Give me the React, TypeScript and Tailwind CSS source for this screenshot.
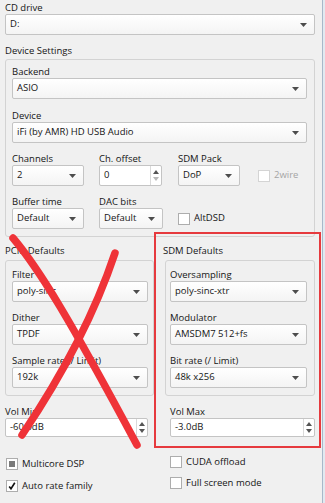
import type { ReactNode } from 'react';
import clsx from 'clsx';

function Label({ children, className }: { children: ReactNode; className?: string }) {
  return <div className={clsx('h-[13px] whitespace-nowrap leading-[13px]', className)}>{children}</div>;
}

function Combo({ value, className }: { value: string; className?: string }) {
  return (
    <div
      className={clsx(
        'flex h-[21px] items-center justify-between rounded-[2px] border border-[#c4c4c4] bg-linear-to-b from-white to-[#f4f4f4] pr-[7px] pl-[4px]',
        className,
      )}
    >
      <span className="whitespace-nowrap">{value}</span>
      <svg width="7" height="4" viewBox="0 0 7 4" className="shrink-0">
        <path d="M0 0H7L3.5 4Z" fill="#4d4d4d" />
      </svg>
    </div>
  );
}

function Spin({ value, className, downDim }: { value: string; className?: string; downDim?: boolean }) {
  return (
    <div className={clsx('flex rounded-[2px] border border-[#c4c4c4] bg-white', className)}>
      <span className="flex flex-1 items-center whitespace-nowrap pl-[4px]">{value}</span>
      <span className="flex w-[11px] flex-col items-center justify-center gap-[3px] border-l border-[#dadada]">
        <svg width="6" height="4" viewBox="0 0 6 4">
          <path d="M3 0L6 4H0Z" fill="#555" />
        </svg>
        <svg width="6" height="4" viewBox="0 0 6 4">
          <path d="M0 0H6L3 4Z" fill={downDim ? '#b8b8b8' : '#555'} />
        </svg>
      </span>
    </div>
  );
}

function Check({ state = 'off', disabled }: { state?: 'off' | 'on' | 'partial'; disabled?: boolean }) {
  return (
    <span
      className={clsx(
        'flex h-[12px] w-[12px] shrink-0 items-center justify-center border bg-white',
        disabled ? 'border-[#d4d4d4]' : 'border-[#adadad]',
      )}
    >
      {state === 'partial' && <span className="h-[6px] w-[6px] bg-[#7a7a7a]" />}
      {state === 'on' && (
        <svg width="8" height="8" viewBox="0 0 8 8">
          <path d="M1.2 4.4L3 6.8L6.8 0.8" stroke="#111" strokeWidth="1.6" fill="none" />
        </svg>
      )}
    </span>
  );
}

export default function App() {
  return (
    <div className="relative flex h-[503px] w-[325px] overflow-hidden bg-[#f0f0f0] font-['Open_Sans','Noto_Sans',sans-serif] text-[9.5px] text-[#151515]">
      <div className="w-[322px] pt-[1px] pr-[7px] pl-[5px]">
        <Label>CD drive</Label>
        <Combo value="D:" />

        <Label className="mt-[9px]">Device Settings</Label>
        <div className="mt-[2px] rounded-[3px] border border-[#d3d3d3] pt-[5px] pr-[7px] pb-[7px] pl-[6px]">
          <Label>Backend</Label>
          <Combo value="ASIO" />
          <Label className="mt-[10px]">Device</Label>
          <Combo value="iFi (by AMR) HD USB Audio" />

          <div className="mt-[9px] flex items-end">
            <div className="w-[72px]">
              <Label>Channels</Label>
              <Combo value="2" />
            </div>
            <div className="ml-[15px] w-[63px]">
              <Label>Ch. offset</Label>
              <Spin value="0" className="h-[21px]" downDim />
            </div>
            <div className="ml-[16px] w-[62px]">
              <Label>SDM Pack</Label>
              <Combo value="DoP" />
            </div>
            <div className="ml-[18px] flex h-[21px] items-center gap-[4px] text-[#a5a5a5]">
              <Check disabled />
              <span>2wire</span>
            </div>
          </div>

          <div className="mt-[9px] flex items-end">
            <div className="w-[72px]">
              <Label>Buffer time</Label>
              <Combo value="Default" />
            </div>
            <div className="ml-[15px] w-[64px]">
              <Label>DAC bits</Label>
              <Combo value="Default" />
            </div>
            <div className="ml-[15px] flex h-[21px] items-center gap-[4px]">
              <Check />
              <span>AltDSD</span>
            </div>
          </div>
        </div>

        <div className="mt-[7px] flex">
          <div className="w-[149px]">
            <Label>PCM Defaults</Label>
            <div className="mt-[3px] rounded-[3px] border border-[#d3d3d3] pt-[7px] pr-[5px] pb-[7px] pl-[6px]">
              <Label>Filter</Label>
              <Combo value="poly-sinc" />
              <Label className="mt-[9px]">Dither</Label>
              <Combo value="TPDF" />
              <Label className="mt-[9px]">Sample rate (/ Limit)</Label>
              <Combo value="192k" />
            </div>
            <Label className="mt-[9px]">Vol Min</Label>
            <Spin value="-60.0dB" className="h-[19px] w-[143px]" />
            <div className="mt-[19px] flex h-[16px] items-center gap-[4px] pl-[1px]">
              <Check state="partial" />
              <span>Multicore DSP</span>
            </div>
            <div className="mt-[6px] flex h-[16px] items-center gap-[4px] pl-[1px]">
              <Check state="on" />
              <span>Auto rate family</span>
            </div>
          </div>

          <div className="ml-[9px] flex-1">
            <Label>SDM Defaults</Label>
            <div className="mt-[3px] ml-[2px] rounded-[3px] border border-[#d3d3d3] pt-[7px] pr-[7px] pb-[7px] pl-[4px]">
              <Label>Oversampling</Label>
              <Combo value="poly-sinc-xtr" />
              <Label className="mt-[9px]">Modulator</Label>
              <Combo value="AMSDM7 512+fs" />
              <Label className="mt-[9px]">Bit rate (/ Limit)</Label>
              <Combo value="48k x256" />
            </div>
            <div className="pl-[7px]">
              <Label className="mt-[9px]">Vol Max</Label>
              <Spin value="-3.0dB" className="h-[19px]" />
              <div className="mt-[17px] flex h-[16px] items-center gap-[4px]">
                <Check />
                <span>CUDA offload</span>
              </div>
              <div className="mt-[5px] flex h-[16px] items-center gap-[4px]">
                <Check />
                <span>Full screen mode</span>
              </div>
            </div>
          </div>
        </div>
      </div>
      <div className="w-px bg-[#a8b8c9]" />
      <div className="flex-1 bg-[#e2e9f0]" />

      {/* annotation overlays */}
      <div className="pointer-events-none absolute top-[232px] left-[154px] h-[216px] w-[167px] border-2 border-[#e63a3e]" />
      <svg className="pointer-events-none absolute top-0 left-0" width="325" height="503" viewBox="0 0 325 503">
        <g fill="none" stroke="#ef3338" strokeWidth="7.5" strokeLinecap="round">
          <path d="M13 238C40 270 70 320 137 445" />
          <path d="M115 253Q86 340 22 435" />
        </g>
      </svg>
    </div>
  );
}
